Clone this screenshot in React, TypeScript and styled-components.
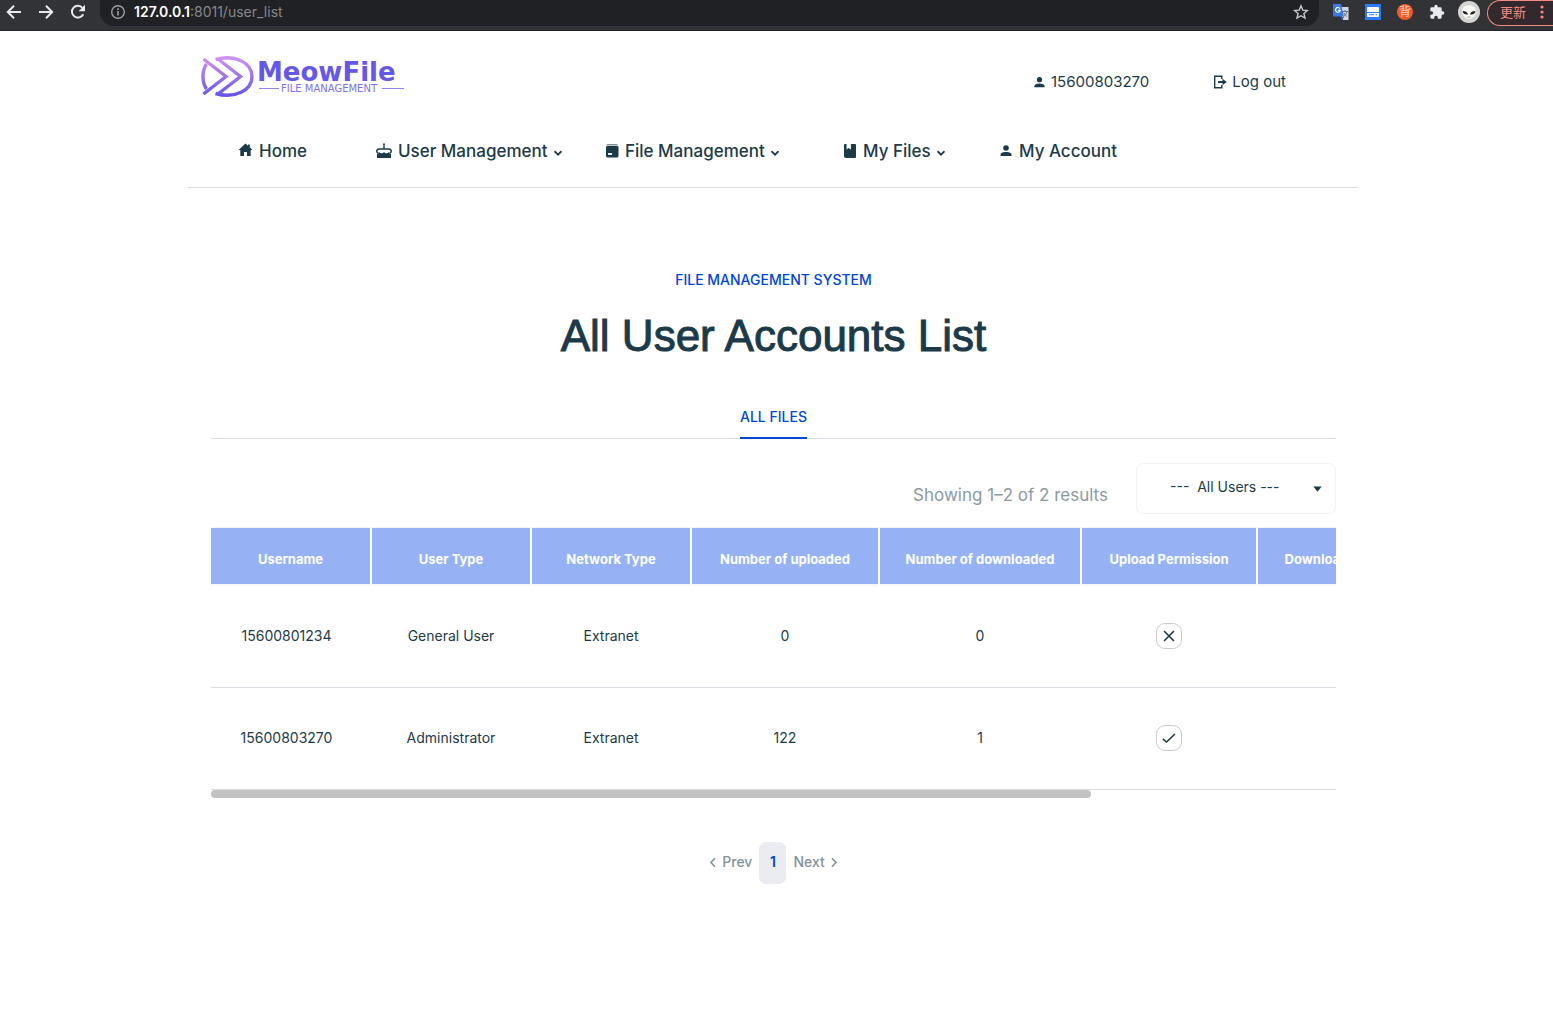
import React, { useEffect, useRef, useState } from "react";
import styled, { createGlobalStyle } from "styled-components";

const GlobalStyle = createGlobalStyle`
  *, *::before, *::after { box-sizing: border-box; }
  body {
    margin: 0;
    background: #fff;
    color: #1c3a48;
    font-family: Inter, "Noto Sans CJK SC", sans-serif;
    font-size: 14px;
    line-height: 20px;
  }
  a { color: inherit; text-decoration: none; }
  button { font: inherit; color: inherit; background: none; border: 0; padding: 0; cursor: pointer; }
  svg { display: block; flex: none; }
`;

/* ---------- browser bar ---------- */

const BrowserBar = styled.div`
  display: flex;
  align-items: flex-start;
  height: 31px;
  background: #323337;
  border-bottom: 1px solid #242528;
  color: #e8eaed;
`;

const BarButtons = styled.div`
  display: flex;
  gap: 16px;
  padding: 4px 14px 0 6px;
`;

const BarButton = styled.button`
  display: block;
  width: 16px;
  height: 16px;
`;

const AddressBar = styled.div`
  flex: 1;
  display: flex;
  align-items: center;
  gap: 8px;
  height: 26px;
  padding: 0 10px 2px 10px;
  background: #202124;
  border-radius: 0 0 14px 14px;
  color: #9aa0a6;
`;

const Host = styled.span`
  color: #fff;
  font-weight: 600;
`;

const AddressText = styled.span`
  flex: 1;
  color: #85888c;
`;

const Extensions = styled.div`
  display: flex;
  align-items: center;
  gap: 16px;
  height: 24px;
  padding: 0 10px 0 14px;
`;

const Badge = styled.button`
  width: 16px;
  height: 16px;
  border-radius: 8px;
  background: #f4592b;
  color: #ffd3c2;
  font-size: 12px;
  line-height: 16px;
`;

const Avatar = styled.button`
  width: 22px;
  height: 22px;
  margin: 0 -3px;
`;

const UpdateButton = styled.button`
  display: flex;
  align-items: center;
  gap: 14px;
  width: 66px;
  height: 26px;
  padding: 0 0 2px 12px;
  border: 1px solid #f28b82;
  border-right: 0;
  border-radius: 13px 0 0 13px;
  background: #33282c;
  color: #f28b82;
  font-size: 13px;
`;

/* ---------- page ---------- */

const Page = styled.div`
  padding-right: 7px;
`;

const Container = styled.div`
  max-width: 1170px;
  margin: 0 auto;
`;

const Header = styled.header`
  border-bottom: 1px solid #dcdce4;
`;

const HeaderTop = styled.div`
  display: flex;
  justify-content: space-between;
  align-items: center;
  padding: 22px 72px 0 13px;
`;

const AccountLinks = styled.div`
  display: flex;
  gap: 64px;
  padding-top: 10px;
`;

const AccountLink = styled.a`
  display: flex;
  align-items: center;
  gap: 5px;
  font-size: 15px;
`;

const Nav = styled.nav`
  display: grid;
  grid-template-columns: 138px 229px 238px 156px 1fr;
  padding: 38px 0 24px 50px;
`;

const NavItem = styled.a`
  display: flex;
  align-items: center;
  gap: 6px;
  font-size: 17px;
  font-weight: 500;
  line-height: 24px;
`;

const Main = styled.main`
  padding: 82px 22px 0 23px;
  text-align: center;
`;

const Eyebrow = styled.p`
  margin: 0;
  color: #0046d5;
  font-weight: 500;
`;

const Title = styled.h1`
  margin: 16px 0 0;
  font-family: "Liberation Sans", Arial, sans-serif;
  font-size: 44px;
  font-weight: 400;
  line-height: 60px;
  -webkit-text-stroke: 1px #1c3a48;
`;

const Tabs = styled.div`
  display: flex;
  justify-content: center;
  margin-top: 41px;
  border-bottom: 1px solid #dcdce4;
`;

const Tab = styled.button`
  height: 32px;
  margin-bottom: -1px;
  padding-bottom: 10px;
  border-bottom: 2px solid #0046d5;
  color: #0046d5;
  font-weight: 500;
`;

const Toolbar = styled.div`
  display: flex;
  justify-content: flex-end;
  align-items: center;
  gap: 28px;
  margin: 24px 0 13px;
`;

const ResultCount = styled.p`
  margin: 0;
  padding-top: 13px;
  color: #8b9aa1;
  font-size: 17px;
`;

const SelectBox = styled.label`
  display: grid;
  align-items: center;
  width: 200px;
  height: 51px;
  border: 1px solid #f2f2f5;
  border-radius: 7px;

  & > * { grid-area: 1 / 1; }
  & > svg { justify-self: end; margin-right: 13px; pointer-events: none; }
`;

const Select = styled.select`
  appearance: none;
  width: 100%;
  height: 100%;
  padding: 0 40px 4px 33px;
  border: 0;
  background: none;
  color: inherit;
  font: inherit;
`;

const TableScroll = styled.div`
  overflow-x: auto;
  scrollbar-width: none;
`;

const Table = styled.table`
  width: 1438px;
  table-layout: fixed;
  border-collapse: separate;
  border-spacing: 0;
`;

const Col = styled.col<{ $width: number }>`
  width: ${(p) => p.$width}px;
`;

const HeadCell = styled.th`
  height: 59px;
  padding: 6px 0 0;
  border-top: 1px solid #f4f4f6;
  border-bottom: 2px solid #f6f6f8;
  border-right: 2px solid #fff;
  background: #96b2f4;
  background-clip: padding-box;
  color: #fff;
  font-size: 13px;
  font-weight: 700;
  white-space: nowrap;
`;

const Cell = styled.td`
  height: 102px;
  padding: 0 2px 2px 0;
  border-bottom: 1px solid #dcdce4;

  &:first-child { padding-right: 10px; }
`;

const PermissionButton = styled.button`
  display: inline-grid;
  place-items: center;
  width: 26px;
  height: 26px;
  border: 1px solid #c9cbce;
  border-radius: 9px;
  vertical-align: middle;
`;

const Thumb = styled.div`
  height: 8px;
  border-radius: 4px;
  background: #c3c3c3;
`;

const Pagination = styled.nav`
  display: flex;
  justify-content: center;
  align-items: center;
  gap: 7px;
  margin-top: 44px;
  color: #85929a;
  font-weight: 500;
`;

const Step = styled.a`
  display: flex;
  align-items: center;
  gap: 5px;
  padding-bottom: 2px;
`;

const CurrentPage = styled.a`
  width: 27px;
  height: 42px;
  border-radius: 7px;
  background: #ebecf2;
  color: #0046d5;
  font-weight: 600;
  line-height: 40px;
`;

/* ---------- icons ---------- */

const Arrow = ({ back }: { back?: boolean }) => (
  <svg width="16" height="16" viewBox="0 0 16 16" fill="none" stroke="#e8eaed" strokeWidth="2">
    {back ? <path d="M15 8H2.5M8 1.8 1.8 8 8 14.2" /> : <path d="M1 8h12.5M8 1.8 14.2 8 8 14.2" />}
  </svg>
);

const Reload = () => (
  <svg width="16" height="16" viewBox="0 0 16 16">
    <path d="M13.2 10.2A5.9 5.9 0 1 1 12.5 4" fill="none" stroke="#e8eaed" strokeWidth="2" />
    <path d="M15 .8v6.4H8.600z" fill="#e8eaed" />
  </svg>
);

const Info = () => (
  <svg width="16" height="16" viewBox="0 0 16 16" fill="none" stroke="#9aa0a6" strokeWidth="1.4">
    <circle cx="8" cy="8" r="6.3" />
    <path d="M8 7v4.500M8 4.300v1.600" strokeWidth="1.6" />
  </svg>
);

const Star = () => (
  <svg width="16" height="16" viewBox="0 0 16 16" fill="none" stroke="#c6c9cd" strokeWidth="1.4">
    <path d="m8 1.8 1.800 4.300 4.600.4-3.500 3 1.100 4.600L8 11.700l-4 2.400 1.100-4.600-3.500-3 4.600-.4z" />
  </svg>
);

const Translate = () => (
  <svg width="16" height="16" viewBox="0 0 16 16">
    <path d="M6 3h9.500v13H10z" fill="#d5d8dc" />
    <path d="M9.500 7.500H15M12 6v1.500M10.500 12.500c2-1 3-3 3.300-5M11 9c.7 1.500 1.700 2.700 3 3.500" fill="none" stroke="#5b7480" />
    <path d="M0 0h8l3 12.500H0z" fill="#3c78e0" />
    <path d="M7 13h4l-2 3z" fill="#2454b8" />
    <path d="M7 4.600A2.400 2.400 0 1 0 7.300 6.400H5" fill="none" stroke="#fff" strokeWidth="1.2" />
  </svg>
);

const Subtitle = () => (
  <svg width="16" height="16" viewBox="0 0 16 16">
    <path d="M0 0h16v16H0z" fill="#2a7bf6" />
    <rect x="2" y="3" width="12" height="10" rx="1" fill="#fff" />
    <path d="M2 8.500h12M4 10.700h5M10.500 10.700H12" stroke="#2a7bf6" />
  </svg>
);

const Puzzle = () => (
  <svg width="16" height="16" viewBox="0 0 24 24" fill="#e8eaed">
    <path d="M20.500 11H19V7a2 2 0 0 0-2-2h-4V3.500a2.500 2.500 0 0 0-5 0V5H4a2 2 0 0 0-2 2v3.800h1.500a2.700 2.700 0 0 1 0 5.400H2V20a2 2 0 0 0 2 2h3.800v-1.500a2.700 2.700 0 0 1 5.400 0V22H17a2 2 0 0 0 2-2v-4h1.500a2.500 2.500 0 0 0 0-5z" />
  </svg>
);

const Alien = () => (
  <svg width="22" height="22" viewBox="0 0 22 22">
    <circle cx="11" cy="11" r="11" fill="#d4d4d2" />
    <path d="M11 4.500c5 0 7 2.500 7 6 0 4-4.500 7.500-7 7.500s-7-3.500-7-7.500c0-3.500 2-6 7-6z" fill="#f7f7f5" />
    <path d="M4.500 10c3 0 5 1 5.500 3.500-3 .5-5-.8-5.500-3.500zM17.500 10c-3 0-5 1-5.500 3.500 3 .5 5-.8 5.500-3.500z" fill="#222" />
    <path d="M9.500 16h3" stroke="#999" />
  </svg>
);

const Dots = () => (
  <svg width="4" height="14" viewBox="0 0 4 14" fill="#f28b82">
    <circle cx="2" cy="2" r="1.6" />
    <circle cx="2" cy="7" r="1.6" />
    <circle cx="2" cy="12" r="1.6" />
  </svg>
);

const Logo = () => (
  <svg width="206" height="48" viewBox="0 0 206 48" role="img" aria-label="MeowFile File Management">
    <defs>
      <linearGradient id="mark" x1="0" y1="0" x2="0" y2="48" gradientUnits="userSpaceOnUse">
        <stop offset=".1" stopColor="#cf93f2" />
        <stop offset=".9" stopColor="#6455e6" />
      </linearGradient>
    </defs>
    <g fill="none" stroke="url(#mark)" strokeWidth="3.4">
      <path d="M2.500 6 25 23.500 2.500 41" />
      <path d="M5.500 11C.8 18 .8 29 5.500 36" />
      <path d="M17 6 39.500 23.500 17 41" />
      <path d="M14.500 6.500C34 1 51 9.500 51 23.500S34 46 14.500 40.500" />
    </g>
    <text x="56" y="28" fill="#6657e4" fontFamily="DejaVu Sans" fontWeight="700" fontSize="26">MeowFile</text>
    <text x="80" y="39" fill="#7e71e8" fontFamily="DejaVu Sans" fontSize="10">FILE MANAGEMENT</text>
    <path d="M58 35.500h20M181 35.500h22" stroke="#8f84ec" strokeWidth="1.2" />
  </svg>
);

const Person = ({ size = 14 }: { size?: number }) => (
  <svg width={size} height={size} viewBox="0 0 14 14" fill="currentColor">
    <circle cx="7" cy="4" r="2.8" />
    <path d="M1.500 12v-1C1.500 8.800 4 8 7 8s5.500.8 5.500 3v1z" />
  </svg>
);

const Exit = () => (
  <svg width="14" height="14" viewBox="0 0 14 14" fill="none" stroke="currentColor" strokeWidth="1.4">
    <path d="M8.800 4V1.200H1.700v11.600h7.100V10" />
    <path d="M5 7h5" strokeWidth="2" />
    <path d="M9.500 3.800 13.800 7l-4.300 3.200z" fill="currentColor" stroke="none" />
  </svg>
);

const House = () => (
  <svg width="15" height="16" viewBox="0 0 15 16" fill="currentColor">
    <path d="M7.500.500 10 2.700V1.600h1.800v2.700L14.500 7h-1.800v6H9V9H6v4H2.300V7H.5z" />
  </svg>
);

const Cake = () => (
  <svg width="16" height="16" viewBox="0 0 16 16" fill="currentColor">
    <path d="M7.300 2.200h1.400V6H7.300z" />
    <circle cx="8" cy="1.200" r="1" />
    <path d="M3 6h10a2.200 2.200 0 0 1 2.200 2.200c0 1-.8 1.700-1.700 1.700M3 6A2.200 2.200 0 0 0 .8 8.200c0 1 .8 1.700 1.700 1.700" fill="none" stroke="currentColor" strokeWidth="1.5" />
    <path d="M1 10.500c1.500 0 2-.6 2.500-1.600.6 1 1.300 1.300 2.200 1.300s1.700-.4 2.300-1.300c.6.900 1.400 1.300 2.300 1.300s1.600-.3 2.200-1.300c.5 1 1 1.600 2.500 1.600V15H1z" />
  </svg>
);

const Archive = () => (
  <svg width="14" height="14" viewBox="0 0 14 14">
    <path d="M1.800.8h10.600" stroke="currentColor" strokeWidth="1.2" opacity=".7" />
    <rect x="1" y="2" width="12.500" height="11.500" rx="1.4" fill="currentColor" />
    <path d="M3 10h4" stroke="#fff" strokeWidth="1.8" />
  </svg>
);

const Book = () => (
  <svg width="14" height="16" viewBox="0 0 14 16" fill="currentColor">
    <path d="M2 1h1.500v5.500L5.700 5l2.200 1.500V1H12a1 1 0 0 1 1 1v12a1 1 0 0 1-1 1H3a2 2 0 0 1-2-2V2a1 1 0 0 1 1-1z" />
  </svg>
);

const MenuChevron = () => (
  <svg width="8" height="14" viewBox="0 0 8 14" fill="none" stroke="currentColor" strokeWidth="1.8">
    <path d="M.5 7.200 4 10.700l3.500-3.500" />
  </svg>
);

const StepChevron = ({ next }: { next?: boolean }) => (
  <svg width="8" height="14" viewBox="0 0 8 14" fill="none" stroke="currentColor" strokeWidth="1.6">
    <path d={next ? "M2 3.200 6 7.500 2 11.800" : "M6 3.200 2 7.500l4 4.300"} />
  </svg>
);

const Caret = () => (
  <svg width="9" height="6" viewBox="0 0 9 6" fill="currentColor">
    <path d="M.3.500h8.400L4.500 5.800z" />
  </svg>
);

const Permission = ({ granted, label }: { granted: boolean; label: string }) => (
  <PermissionButton aria-label={label}>
    <svg width="14" height="14" viewBox="0 0 14 14" fill="none" stroke="currentColor" strokeWidth="1.6">
      {granted ? <path d="M.8 7.800 4.500 11 13 3" /> : <path d="m2 2 10 10M12 2 2 12" />}
    </svg>
  </PermissionButton>
);

/* ---------- data ---------- */

const columns = [
  { label: "Username", width: 161 },
  { label: "User Type", width: 160 },
  { label: "Network Type", width: 160 },
  { label: "Number of uploaded", width: 188 },
  { label: "Number of downloaded", width: 202 },
  { label: "Upload Permission", width: 176 },
  { label: "Download Permission", width: 193 },
  { label: "", width: 198 },
];

const users = [
  { name: "15600801234", type: "General User", network: "Extranet", up: 0, down: 0, upload: false },
  { name: "15600803270", type: "Administrator", network: "Extranet", up: 122, down: 1, upload: true },
];

export default function App() {
  const scroller = useRef<HTMLDivElement>(null);
  const [bar, setBar] = useState({ size: 78, offset: 0 });

  useEffect(() => {
    const update = () => {
      const el = scroller.current;
      if (!el) return;
      setBar({
        size: (el.clientWidth / el.scrollWidth) * 100,
        offset: (el.scrollLeft / el.scrollWidth) * 100,
      });
    };
    update();
    const el = scroller.current;
    el?.addEventListener("scroll", update);
    window.addEventListener("resize", update);
    return () => {
      el?.removeEventListener("scroll", update);
      window.removeEventListener("resize", update);
    };
  }, []);

  return (
    <>
      <GlobalStyle />
      <BrowserBar>
        <BarButtons>
          <BarButton aria-label="Back"><Arrow back /></BarButton>
          <BarButton aria-label="Forward"><Arrow /></BarButton>
          <BarButton aria-label="Reload"><Reload /></BarButton>
        </BarButtons>
        <AddressBar>
          <Info />
          <AddressText><Host>127.0.0.1</Host>:8011/user_list</AddressText>
          <BarButton aria-label="Bookmark"><Star /></BarButton>
        </AddressBar>
        <Extensions>
          <BarButton aria-label="Translate"><Translate /></BarButton>
          <BarButton aria-label="Subtitles"><Subtitle /></BarButton>
          <Badge>背</Badge>
          <BarButton aria-label="Extensions"><Puzzle /></BarButton>
          <Avatar aria-label="Profile"><Alien /></Avatar>
        </Extensions>
        <UpdateButton>更新 <Dots /></UpdateButton>
      </BrowserBar>

      <Page>
        <Container>
          <Header>
            <HeaderTop>
              <a href="#home"><Logo /></a>
              <AccountLinks>
                <AccountLink href="#account"><Person size={13} />15600803270</AccountLink>
                <AccountLink href="#logout"><Exit />Log out</AccountLink>
              </AccountLinks>
            </HeaderTop>
            <Nav>
              <NavItem href="#home"><House />Home</NavItem>
              <NavItem href="#users"><Cake />User Management<MenuChevron /></NavItem>
              <NavItem href="#files"><Archive />File Management<MenuChevron /></NavItem>
              <NavItem href="#mine"><Book />My Files<MenuChevron /></NavItem>
              <NavItem href="#account"><Person />My Account</NavItem>
            </Nav>
          </Header>

          <Main>
            <Eyebrow>FILE MANAGEMENT SYSTEM</Eyebrow>
            <Title>All User Accounts List</Title>
            <Tabs role="tablist">
              <Tab role="tab" aria-selected="true">ALL FILES</Tab>
            </Tabs>
            <Toolbar>
              <ResultCount>Showing 1–2 of 2 results</ResultCount>
              <SelectBox>
                <Select aria-label="User filter">
                  <option>---{"\u00a0"} All Users ---</option>
                </Select>
                <Caret />
              </SelectBox>
            </Toolbar>

            <TableScroll ref={scroller}>
              <Table>
                <colgroup>
                  {columns.map((c, i) => <Col key={i} $width={c.width} />)}
                </colgroup>
                <thead>
                  <tr>{columns.map((c, i) => <HeadCell key={i}>{c.label}</HeadCell>)}</tr>
                </thead>
                <tbody>
                  {users.map((u) => (
                    <tr key={u.name}>
                      <Cell>{u.name}</Cell>
                      <Cell>{u.type}</Cell>
                      <Cell>{u.network}</Cell>
                      <Cell>{u.up}</Cell>
                      <Cell>{u.down}</Cell>
                      <Cell><Permission granted={u.upload} label="Upload permission" /></Cell>
                      <Cell />
                      <Cell />
                    </tr>
                  ))}
                </tbody>
              </Table>
            </TableScroll>
            <Thumb style={{ width: `${bar.size}%`, marginLeft: `${bar.offset}%` }} />

            <Pagination aria-label="Pages">
              <Step href="#prev"><StepChevron />Prev</Step>
              <CurrentPage href="#1" aria-current="page">1</CurrentPage>
              <Step href="#next">Next<StepChevron next /></Step>
            </Pagination>
          </Main>
        </Container>
      </Page>
    </>
  );
}
